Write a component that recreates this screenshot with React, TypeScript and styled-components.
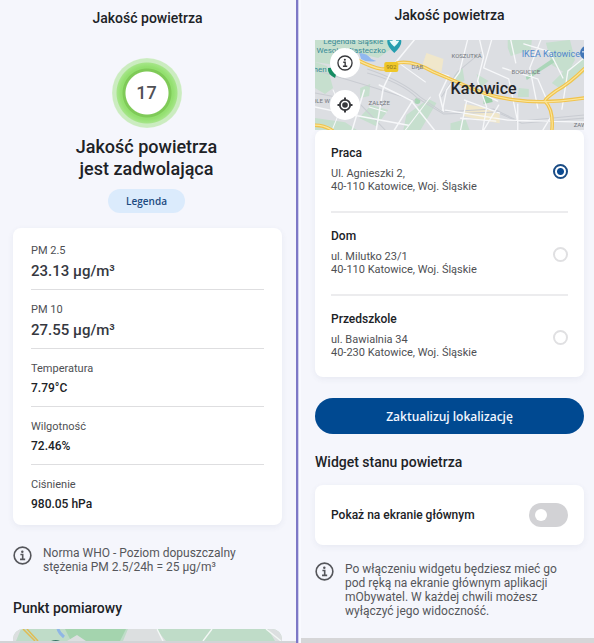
import React, { useState } from "react";
import styled, { createGlobalStyle, css } from "styled-components";

const GlobalStyle = createGlobalStyle`
  *, *::before, *::after { box-sizing: border-box; }
  body {
    margin: 0;
    background: #f5f6fc;
    color: #202226;
    font-family: Roboto, "Liberation Sans", sans-serif;
  }
  h1, h2, p, dl, dd, dt { margin: 0; font-weight: inherit; }
  button, input { font: inherit; }
`;

const Screens = styled.main`
  display: flex;
  min-height: 100vh;
`;

const Screen = styled.section<{ $side: "left" | "right" }>`
  flex: 1 1 0;
  min-width: 0;
  display: flex;
  flex-direction: column;
  ${({ $side }) =>
    $side === "left"
      ? css`
          padding: 8px 14px 0 13px;
          border-bottom: 2px solid #d3d3d6;
        `
      : css`
          padding: 5px 10px 0 14px;
          border-bottom: 5px solid #d6d6d8;
        `}
`;

const Divider = styled.div`
  flex: none;
  width: 5px;
  background: #f9faff;
  border-left: 2px solid #7d78c6;
  box-shadow: inset 1px 0 #cfd0ee;
`;

const ScreenTitle = styled.h1`
  font-size: 14px;
  font-weight: 500;
  line-height: 20px;
  text-align: center;
`;

const Summary = styled.div`
  display: flex;
  flex-direction: column;
  align-items: center;
  padding: 30px 2px 15px 0;
`;

const Gauge = styled.div`
  display: grid;
  place-items: center;
  width: 70px;
  height: 70px;
  border-radius: 50%;
  background: radial-gradient(
    circle closest-side,
    #ffffff 21px,
    #7fca58 22px 24px,
    #93e06f 25px 26px,
    #a5e588 30px,
    #cbecc0 31px 34px,
    #d4efcb 35px
  );
  color: #515156;
  font-size: 18px;
  font-weight: 500;
  line-height: 24px;
`;

const Verdict = styled.h2`
  margin-top: 8px;
  font-size: 18px;
  font-weight: 500;
  line-height: 22px;
  text-align: center;
`;

const LegendButton = styled.button`
  height: 24px;
  margin-top: 9px;
  padding: 0 18px;
  border: 0;
  border-radius: 12px;
  background: #dbebfc;
  color: #1b4a80;
  font-family: "Open Sans", sans-serif;
  font-size: 10px;
  font-weight: 600;
  cursor: pointer;
`;

const Card = styled.div`
  border-radius: 8px;
  background: #fff;
  box-shadow: 0 2px 6px rgba(60, 70, 110, 0.07);
`;

const Metrics = styled(Card)`
  padding: 3px 18px;
`;

const Metric = styled.div`
  padding: 12px 0 8px;
  border-bottom: 1px solid #dedee0;
  &:last-child { border-bottom: 0; }
`;

const MetricLabel = styled.dt`
  color: #4e4f53;
  font-size: 11px;
  line-height: 16px;
`;

const MetricValue = styled.dd<{ $large?: boolean }>`
  && { margin-top: 2px; }
  color: ${({ $large }) => ($large ? "#36383f" : "#202226")};
  font-size: ${({ $large }) => ($large ? 15 : 12)}px;
  font-weight: 500;
  line-height: ${({ $large }) => ($large ? 20 : 19)}px;
`;

const Note = styled.div<{ $before: number }>`
  display: flex;
  align-items: flex-start;
  gap: 11px;
  margin-top: ${({ $before }) => $before}px;
  color: #55565b;
  font-size: 12px;
  line-height: 14px;
  svg { flex: none; }
`;

const SectionTitle = styled.h2<{ $before: number; $after: number }>`
  padding: ${({ $before, $after }) => `${$before}px 0 ${$after}px`};
  font-size: 14px;
  font-weight: 500;
  line-height: 20px;
`;

const MapPreview = styled.div`
  flex: none;
  height: 12px;
  overflow: hidden;
  border-radius: 10px 10px 0 0;
  svg { display: block; width: 100%; height: 100%; }
`;

const MapPanel = styled.div`
  position: relative;
  height: 90px;
  margin-top: 15px;
  overflow: hidden;
  svg.map { display: block; width: 100%; height: 100%; }
`;

const MapControls = styled.div`
  position: absolute;
  top: 8px;
  left: 15px;
  display: grid;
  gap: 12px;
`;

const MapButton = styled.button`
  display: grid;
  place-items: center;
  width: 30px;
  height: 30px;
  padding: 0;
  border: 0;
  border-radius: 50%;
  background: #fff;
  color: #38393c;
  cursor: pointer;
`;

const Places = styled(Card)`
  padding: 0 16px;
`;

const Place = styled.label`
  display: flex;
  align-items: center;
  justify-content: space-between;
  padding: 14px 0 18px;
  border-bottom: 2px solid #ececee;
  cursor: pointer;
  &:last-child { border-bottom: 0; }
`;

const PlaceName = styled.span`
  display: block;
  margin-bottom: 5px;
  font-size: 12px;
  font-weight: 500;
  line-height: 18px;
`;

const PlaceAddress = styled.span`
  display: block;
  color: #4e4f53;
  font-size: 11px;
  line-height: 13px;
`;

const Radio = styled.input`
  appearance: none;
  flex: none;
  width: 15px;
  height: 15px;
  margin: 6px 0 0;
  border: 2px solid #e0e0e2;
  border-radius: 50%;
  background: #fff;
  cursor: pointer;
  &:checked {
    border-color: #1a4c85;
    background: radial-gradient(circle, #0b4a91 3px, #fff 4px);
  }
`;

const PrimaryButton = styled.button`
  flex: none;
  height: 36px;
  margin-top: 21px;
  border: 0;
  border-radius: 18px;
  background: #004991;
  color: #f1f6ff;
  font-family: "Open Sans", sans-serif;
  font-size: 12px;
  font-weight: 600;
  cursor: pointer;
`;

const SwitchRow = styled(Card)`
  display: flex;
  align-items: center;
  justify-content: space-between;
  height: 60px;
  padding: 0 16px;
  font-size: 12px;
  font-weight: 500;
`;

const Switch = styled.input`
  appearance: none;
  display: flex;
  align-items: center;
  width: 39px;
  height: 24px;
  margin: 0;
  padding: 0 6px;
  border-radius: 12px;
  background: #d2d2d5;
  cursor: pointer;
  &::before {
    content: "";
    width: 12px;
    height: 12px;
    border-radius: 50%;
    background: #fff;
  }
  &:checked { justify-content: flex-end; background: #004991; }
`;

const InfoIcon = ({ size }: { size: number }) => (
  <svg width={size} height={size} viewBox="0 0 20 20" fill="none" stroke="currentColor" aria-hidden="true">
    <circle cx="10" cy="10" r="8.8" strokeWidth="1.7" />
    <circle cx="9.8" cy="6" r="1.3" fill="currentColor" stroke="none" />
    <path d="M7.8 9h2.4v5M7.4 14.1h5.4" strokeWidth="1.7" />
  </svg>
);

const TargetIcon = () => (
  <svg width="18" height="18" viewBox="0 0 18 18" fill="none" stroke="currentColor" aria-hidden="true">
    <circle cx="9" cy="9" r="5.2" strokeWidth="1.8" />
    <circle cx="9" cy="9" r="2.8" fill="currentColor" stroke="none" />
    <path d="M9 1.5v3M9 13.5v3M1.5 9h3M13.5 9h3" strokeWidth="2" />
  </svg>
);

const CityMap = () => (
  <svg className="map" viewBox="0 0 268 90" preserveAspectRatio="xMidYMid slice" role="img" aria-label="Mapa Katowic">
    <rect width="268" height="90" fill="#dcdee2" />
    <g fill="#c6dfce">
      <path d="M0 0h84l-8 9-13 9-22-5L20 25 0 22z" />
      <path d="M0 22l12 4 6 22-8 6-10-6z" />
      <path d="M45 48l10-4-1 12-9 2zM56 65l17 5-12 16-17-8zM91 75l22-16 8 4-16 27H88zM0 78l30 4 12 8H0z" />
      <path d="M139 35l8-7 2 13-9 3zM161 34l12 7-8 6zM203 48l10 1v8h-11z" />
      <path d="M192 0h24l-1 10-20 6-3-8zM230 3l24-3 5 20-8 14-15-9zM247 32l21-14v15l-22 17-10-7zM135 83l15-4 4 11h-19z" />
      <circle cx="102" cy="61" r="3" fill="#a9d5b5" />
      <path d="M210 37l26-18 3 3-28 18z" fill="#abd6b9" />
      <path d="M168 56l7-3 2 9-9 2z" fill="#9bd0a8" />
    </g>
    <g fill="#f0e7cb">
      <path d="M111 13l17 6-2 13-19-7zM149 64l17 3 18 7 0 9-17-3-19-4z" />
    </g>
    <path d="M44 13q8 0 12 6l5 2q-9 2-15-2z" fill="#91b8ef" />
    <g fill="none" stroke="#c9ccd2" strokeWidth="1">
      <path d="M52 29q34 11 53 28l22 15 51-3 25 12 65-6" />
      <path d="M52 33q34 9 50 25l26 16 53-2 25 11 62-5M0 53l42 8 28 29M0 30l60 18 40 13M126 57l16-25 24-20" />
    </g>
    <g fill="none" stroke="#f7f8fa" strokeWidth="1.3" strokeLinecap="round">
      <path d="M99 0L80 23 68 48 61 90M49 50L37 90M0 67l38 8 55 10M64 45l33 16-18 29M96 61l23 29M114 30l19 6-9 19 4 16" strokeWidth="1.5" />
      <path d="M164 0l4 17-6 24 9 26-4 23M152 0l-8 32-13 18-4 20M176 0l-8 28 25 11 9 43M187 28l35 11 12 28M195 0l5 23M208 4l26 8 13 26M225 0l-11 28 8 40M133 37l49 24M130 70l62 10 76 2M151 61l-6 29M183 65l-15 25M246 69l6-38 16-13M149 60l35 13M145 78l35 3M202 64v26M236 75l-9 15" />
      <path d="M18 50l8 18-9 22M54 67l17 5M82 22l28 20M115 57l-25 33" strokeWidth="1" />
    </g>
    <g fill="none" strokeLinecap="round">
      <path d="M42 20q16 8 24 9t16-6q15-3 36 9l26 11q28 14 56 17 28 4 68-2M268 29q-14 14-28 22-11 8-11 10 9 9 7 29M0 85q9 0 17 5" stroke="#f1c34c" strokeWidth="3.5" />
      <path d="M42 20q16 8 24 9t16-6q15-3 36 9l26 11q28 14 56 17 28 4 68-2M268 29q-14 14-28 22-11 8-11 10 9 9 7 29M0 85q9 0 17 5" stroke="#fae59a" strokeWidth="1.2" />
    </g>
    <rect x="69" y="22" width="14" height="10" rx="2" fill="#efc728" />
    <path d="M72 2a7 7 0 0 1 14 0q0 5-7 11-7-6-7-11z" fill="#259eaf" />
    <path d="M79-2l2 3 3 0-2 3-3 3-3-3-2-3h3z" fill="#e8fbfb" />
    <path d="M13 28q-1 6 7 10l3-11z" fill="#168c63" />
    <g fontFamily="Roboto, sans-serif" textAnchor="middle">
      <g fill="#398b97" fontSize="8">
        <text x="38" y="4">Legendia Śląskie</text>
        <text x="36" y="13">Wesołe Miasteczko</text>
        <text x="5" y="32">hen</text>
      </g>
      <g fill="#73767d" fontSize="6">
        <text x="76" y="29" fill="#8d7423">902</text>
        <text x="102" y="29">DĄB</text>
        <text x="151" y="18">KOSZUTKA</text>
        <text x="210" y="34">BOGUCICE</text>
        <text x="64" y="65">ZAŁĘŻE</text>
        <text x="6" y="63">OLE W</text>
        <text x="264" y="87">ZAW</text>
      </g>
      <text x="235" y="17" fill="#5288cc" fontSize="9">IKEA Katowice</text>
      <text x="168" y="54" fill="#242529" fontSize="16" fontWeight="500">Katowice</text>
    </g>
    <circle cx="271" cy="13" r="7" fill="#4277b8" />
    <path d="M266 12h4" stroke="#fff" />
  </svg>
);

const PointMap = () => (
  <svg viewBox="0 0 269 12" preserveAspectRatio="xMidYMin slice" role="img" aria-label="Mapa punktu pomiarowego">
    <rect width="269" height="12" fill="#bfdcc8" />
    <path d="M52 0h61l-6 12H58z" fill="#a4d4ae" />
    <path d="M115 0h28l10 12h-43zM54 12l10-6 9 6zM0 0h8L3 12H0zM255 0h14v12h-7z" fill="#dcdfe0" />
    <path d="M10 0l12 12M14 0l11 12" stroke="#dfbc55" strokeWidth="1.5" />
    <path d="M45 0q1 4 6 8" stroke="#8fb6e5" strokeWidth="3" fill="none" />
    <path d="M144 0l6 12M199 0l-9 12M253 0l15 12" stroke="#f3f7f5" strokeWidth="1.4" />
    <path d="M38 12q5-2 9 0z" fill="#387565" />
  </svg>
);

const metrics = [
  { label: "PM 2.5", value: "23.13 µg/m³", large: true },
  { label: "PM 10", value: "27.55 µg/m³", large: true },
  { label: "Temperatura", value: "7.79°C" },
  { label: "Wilgotność", value: "72.46%" },
  { label: "Ciśnienie", value: "980.05 hPa" },
];

const places = [
  { name: "Praca", street: "Ul. Agnieszki 2,", city: "40-110 Katowice, Woj. Śląskie" },
  { name: "Dom", street: "ul. Milutko 23/1", city: "40-110 Katowice, Woj. Śląskie" },
  { name: "Przedszkole", street: "ul. Bawialnia 34", city: "40-230 Katowice, Woj. Śląskie" },
];

export default function App() {
  const [place, setPlace] = useState("Praca");
  const [widget, setWidget] = useState(false);

  return (
    <>
      <GlobalStyle />
      <Screens>
        <Screen $side="left">
          <ScreenTitle>Jakość powietrza</ScreenTitle>
          <Summary>
            <Gauge>17</Gauge>
            <Verdict>
              Jakość powietrza
              <br />
              jest zadwolająca
            </Verdict>
            <LegendButton type="button">Legenda</LegendButton>
          </Summary>
          <Metrics as="dl">
            {metrics.map(({ label, value, large }) => (
              <Metric key={label}>
                <MetricLabel>{label}</MetricLabel>
                <MetricValue $large={large}>{value}</MetricValue>
              </Metric>
            ))}
          </Metrics>
          <Note $before={21}>
            <InfoIcon size={19} />
            <p>
              Norma WHO - Poziom dopuszczalny
              <br />
              stężenia PM 2.5/24h = 25 µg/m³
            </p>
          </Note>
          <SectionTitle $before={24} $after={11}>Punkt pomiarowy</SectionTitle>
          <MapPreview>
            <PointMap />
          </MapPreview>
        </Screen>
        <Divider />
        <Screen $side="right">
          <ScreenTitle>Jakość powietrza</ScreenTitle>
          <MapPanel>
            <CityMap />
            <MapControls>
              <MapButton type="button" aria-label="Informacje">
                <InfoIcon size={16} />
              </MapButton>
              <MapButton type="button" aria-label="Moja lokalizacja">
                <TargetIcon />
              </MapButton>
            </MapControls>
          </MapPanel>
          <Places role="radiogroup" aria-label="Lokalizacja">
            {places.map(({ name, street, city }) => (
              <Place key={name}>
                <span>
                  <PlaceName>{name}</PlaceName>
                  <PlaceAddress>{street}</PlaceAddress>
                  <PlaceAddress>{city}</PlaceAddress>
                </span>
                <Radio type="radio" name="place" checked={place === name} onChange={() => setPlace(name)} />
              </Place>
            ))}
          </Places>
          <PrimaryButton type="button">Zaktualizuj lokalizację</PrimaryButton>
          <SectionTitle $before={18} $after={13}>Widget stanu powietrza</SectionTitle>
          <SwitchRow>
            <label htmlFor="widget">Pokaż na ekranie głównym</label>
            <Switch
              id="widget"
              type="checkbox"
              role="switch"
              checked={widget}
              onChange={(event) => setWidget(event.target.checked)}
            />
          </SwitchRow>
          <Note $before={17}>
            <InfoIcon size={19} />
            <p>
              Po włączeniu widgetu będziesz mieć go
              <br />
              pod ręką na ekranie głównym aplikacji
              <br />
              mObywatel. W każdej chwili możesz
              <br />
              wyłączyć jego widoczność.
            </p>
          </Note>
        </Screen>
      </Screens>
    </>
  );
}
